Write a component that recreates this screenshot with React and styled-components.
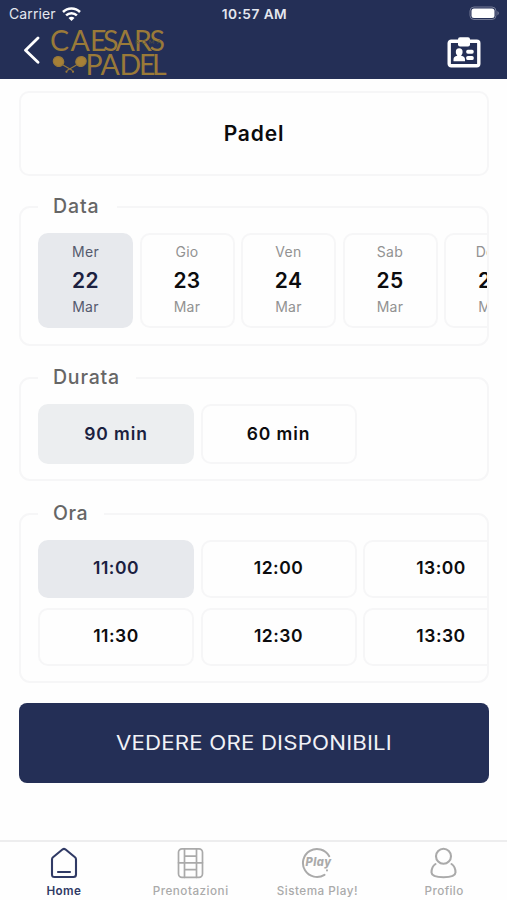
import React from 'react';
import styled, { createGlobalStyle } from 'styled-components';

const navy = '#242f56';
const line = '#f6f6f7';

const GlobalStyle = createGlobalStyle`
  * { box-sizing: border-box; }
  body { margin: 0; background: #fefefe; font-family: Inter, "Liberation Sans", sans-serif; }
  button { font-family: inherit; padding: 0; cursor: pointer; }
`;

const Screen = styled.div`
  width: 507px;
  height: 900px;
  display: flex;
  flex-direction: column;
  overflow: hidden;
  background: #fefefe;
`;

const Header = styled.header`
  height: 79px;
  flex: none;
  background: ${navy};
  color: #e4e7ef;
`;

const StatusBar = styled.div`
  height: 27px;
  display: grid;
  grid-template-columns: 1fr auto 1fr;
  align-items: center;
  padding: 1px 7px 0 9px;
  font-size: 14px;
  line-height: 26px;
`;

const Carrier = styled.div`
  display: flex;
  align-items: center;
  gap: 6px;
  letter-spacing: 0.1px;
`;

const Clock = styled.div`
  font-weight: 600;
  font-size: 13.7px;
  letter-spacing: 0.45px;
`;

const Battery = styled.svg`
  justify-self: end;
  margin-bottom: 2px;
`;

const NavBar = styled.div`
  height: 52px;
  display: flex;
  align-items: flex-start;
  padding: 0 26px 0 22px;
`;

const IconButton = styled.button`
  display: flex;
  border: 0;
  background: none;
  color: #fff;
  margin-top: ${p => p.$top}px;
`;

const Logo = styled.svg`
  margin-left: 8px;
  margin-right: auto;
  overflow: visible;
`;

const Content = styled.main`
  flex: 1;
  display: flex;
  flex-direction: column;
  padding: 12px 18px 0 19px;
`;

const TitleCard = styled.h1`
  margin: 0 0 30px;
  height: 85px;
  flex: none;
  display: flex;
  align-items: center;
  justify-content: center;
  border: 2px solid ${line};
  border-radius: 10px;
  color: #0b0b0d;
  font-size: 21px;
  font-weight: 600;
  letter-spacing: 0.85px;
  padding-bottom: 1px;
`;

const Group = styled.section`
  height: ${p => p.$height}px;
  flex: none;
  margin-bottom: ${p => p.$after}px;
  border: 2px solid ${line};
  border-radius: 11px;
  padding-left: 17px;
`;

const Legend = styled.h2`
  width: ${p => p.$width}px;
  height: 28px;
  margin: -15px 0 12px;
  padding-left: 15px;
  background: #fefefe;
  color: #666;
  font-size: 19.5px;
  line-height: 27px;
  font-weight: 500;
  letter-spacing: ${p => p.$spacing}px;
  white-space: nowrap;
`;

const Scroller = styled.div`
  display: grid;
  grid-template-columns: repeat(${p => p.$columns}, ${p => p.$size});
  grid-auto-rows: ${p => p.$row}px;
  column-gap: 6.5px;
  row-gap: ${p => p.$gap || 0}px;
  overflow: hidden;
`;

const Tile = styled.button`
  display: flex;
  flex-direction: column;
  align-items: center;
  justify-content: center;
  border: 2px solid ${p => (p.$selected ? p.$fill || '#e7e9ed' : line)};
  border-radius: 10px;
  background: ${p => (p.$selected ? p.$fill || '#e7e9ed' : '#fefefe')};
  color: ${p => (p.$selected ? '#1b2140' : '#0c0c0e')};
  font-size: 17.5px;
  font-weight: 600;
  letter-spacing: ${p => p.$spacing || 0}px;
  padding-bottom: ${p => p.$lift ?? 2}px;
`;

const DateLabel = styled.span`
  font-size: 14px;
  line-height: 20px;
  font-weight: 400;
  letter-spacing: 0.3px;
  color: ${p => (p.$selected ? '#555a6d' : '#929292')};
`;

const DateNumber = styled.span`
  font-size: 21px;
  line-height: 35px;
  padding-top: 1px;
  margin-bottom: -1px;
  font-weight: 600;
  letter-spacing: 0.3px;
`;

const Submit = styled.button`
  height: 80px;
  flex: none;
  border: 0;
  border-radius: 8px;
  background: ${navy};
  color: #f1f2f6;
  font-size: 19.5px;
  font-weight: 400;
  letter-spacing: 0.15px;
`;

const WideLabel = styled.span`
  display: inline-block;
  transform: scaleX(1.14);
`;

const TabBar = styled.nav`
  height: 60px;
  flex: none;
  display: grid;
  grid-template-columns: repeat(4, 1fr);
  border-top: 2px solid #ededee;
  background: #fefefe;
`;

const Tab = styled.button`
  display: flex;
  flex-direction: column;
  align-items: center;
  border: 0;
  background: none;
  padding: 5px 0 0 1px;
  color: ${p => (p.$active ? '#303a65' : '#aaa')};
  font-size: 11.7px;
  line-height: 16px;
  font-weight: ${p => (p.$active ? 600 : 500)};
  letter-spacing: ${p => p.$spacing}px;

  svg { margin-bottom: 4px; }
`;

const days = [['Mer', 22], ['Gio', 23], ['Ven', 24], ['Sab', 25], ['Dom', 26]];
const hours = ['11:00', '12:00', '13:00', '11:30', '12:30', '13:30'];

const outline = { fill: 'none', stroke: 'currentColor', strokeLinecap: 'round', strokeLinejoin: 'round' };

const WifiIcon = () => (
  <svg width="19" height="15" viewBox="0 0 19 15" fill="none" stroke="#fff" strokeWidth="2.5">
    <path d="M1 5C5.7.3 13.3.3 18 5" />
    <path d="M4.1 8.4C7.1 5.5 11.9 5.5 14.9 8.4" />
    <path d="M9.5 13.9 6.5 11C8.2 9.3 10.8 9.3 12.5 11Z" fill="#fff" stroke="none" />
  </svg>
);

const BrandLogo = () => (
  <Logo width="116" height="52" viewBox="0 0 116 52" fill="#9a7a39" fontFamily="Lato, sans-serif" fontWeight="400">
    <text x="0 20.5 40 53 65.5 84 99.5" y="24" fontSize="28.5">CAESARS</text>
    <text x="35.5 50.5 69.5 89 102" y="48" fontSize="28.5">PADEL</text>
    <text x="85" y="16.5" fontSize="6" textLength="26" fill="#59533f">ROMA</text>
    <g fill="#a68037" stroke="#97783a" strokeWidth="1.2">
      <ellipse cx="8.5" cy="34.5" rx="5.3" ry="4.8" transform="rotate(25 8.5 34.5)" />
      <ellipse cx="31" cy="34.5" rx="5.3" ry="4.8" transform="rotate(-25 31 34.5)" />
      <path d="M13 38 22.5 43.5M26.5 38 17 43.5" fill="none" />
      <circle cx="16.5" cy="44.7" r=".5" />
      <circle cx="23" cy="44.7" r=".5" />
    </g>
  </Logo>
);

const BadgeIcon = () => (
  <svg width="34" height="32" viewBox="0 0 34 32" fill="#fff">
    <rect x="2.2" y="4.2" width="29.6" height="24.6" rx="2" fill="none" stroke="#fff" strokeWidth="3.4" />
    <rect x="11" y=".3" width="12" height="9.2" rx="2" />
    <ellipse cx="12.2" cy="15" rx="3.4" ry="3.7" />
    <path d="M10.2 17h4v1.8c2.5.5 3.8 1.5 3.8 3.7v1.7H6.5v-1.7c0-2.2 1.3-3.2 3.7-3.7Z" />
    <rect x="19.2" y="12.7" width="7.5" height="4" rx="1.6" />
    <rect x="19.2" y="19" width="7.5" height="4" rx="1.6" />
  </svg>
);

const HomeIcon = () => (
  <svg width="28" height="32" viewBox="0 0 28 32" {...outline} strokeWidth="2.1">
    <path d="M12.7 2.3Q14 1.3 15.3 2.3L25 10.3Q26 11.1 26 12.4V27.5Q26 30 23.5 30H4.5Q2 30 2 27.5V12.4Q2 11.1 3 10.3Z" />
    <path d="M8 25h12" />
  </svg>
);

const CourtIcon = () => (
  <svg width="28" height="32" viewBox="0 0 28 32" {...outline} strokeWidth="1.7">
    <rect x="1.5" y="1.8" width="24" height="28.5" rx="3.5" />
    <path d="M7.5 1.8V30.3M19.5 1.8V30.3M1.5 15.8H25.5M7.5 9.2H19.5M7.5 22.7H19.5" />
  </svg>
);

const PlayIcon = () => (
  <svg width="32" height="32" viewBox="0 0 32 32" {...outline} strokeWidth="2">
    <path d="M28.2 9.2A14 14 0 1 0 23.5 27.8M26 23.3V23.4" />
    <text x="4.5" y="19" fill="currentColor" stroke="none" fontFamily="Inter, sans-serif" fontSize="12" fontWeight="800" fontStyle="italic" textLength="26" lengthAdjust="spacingAndGlyphs">Play</text>
  </svg>
);

const ProfileIcon = () => (
  <svg width="28" height="32" viewBox="0 0 28 32" {...outline} strokeWidth="2.1">
    <circle cx="13.5" cy="9.3" r="7.5" />
    <path d="M5.5 17Q1.5 19.7 1.5 25.5Q1.7 30.2 13.5 30.2Q25.3 30.2 25.5 25.5Q25.5 19.7 21.5 17" />
  </svg>
);

export default function App() {
  return (
    <Screen>
      <GlobalStyle />
      <Header>
        <StatusBar>
          <Carrier>Carrier <WifiIcon /></Carrier>
          <Clock>10:57 AM</Clock>
          <Battery width="31" height="15" viewBox="0 0 31 15">
            <rect x="1" y="1" width="26" height="12.5" rx="4" fill="none" stroke="#747b96" />
            <rect x="2.5" y="2.5" width="23" height="9.5" rx="2.5" fill="#fff" />
            <path d="M28.5 5Q31 7.2 28.5 9.5Z" fill="#858ba2" />
          </Battery>
        </StatusBar>
        <NavBar>
          <IconButton $top={9} aria-label="Indietro">
            <svg width="20" height="28" viewBox="0 0 20 28" {...outline} strokeWidth="2.8">
              <path d="M16 2 3.5 14.3 16 26.2" />
            </svg>
          </IconButton>
          <BrandLogo />
          <IconButton $top={10} aria-label="Tessera"><BadgeIcon /></IconButton>
        </NavBar>
      </Header>

      <Content>
        <TitleCard>Padel</TitleCard>

        <Group $height={140} $after={31}>
          <Legend $width={79} $spacing={0.9}>Data</Legend>
          <Scroller $columns={5} $size="95px" $row={95}>
            {days.map(([name, number], i) => (
              <Tile key={number} $selected={i === 0}>
                <DateLabel $selected={i === 0}>{name}</DateLabel>
                <DateNumber>{number}</DateNumber>
                <DateLabel $selected={i === 0}>Mar</DateLabel>
              </Tile>
            ))}
          </Scroller>
        </Group>

        <Group $height={104} $after={32}>
          <Legend $width={98} $spacing={0.8}>Durata</Legend>
          <Scroller $columns={2} $size="156px" $row={60}>
            <Tile $selected $fill="#eceef0" $spacing={0.9}>90 min</Tile>
            <Tile $spacing={0.9}>60 min</Tile>
          </Scroller>
        </Group>

        <Group $height={170} $after={20}>
          <Legend $width={66} $spacing={0.6}>Ora</Legend>
          <Scroller $columns={3} $size="156px" $row={58} $gap={10}>
            {hours.map((hour, i) => (
              <Tile key={hour} $selected={i === 0} $lift={4} $spacing={0.5}>{hour}</Tile>
            ))}
          </Scroller>
        </Group>

        <Submit><WideLabel>VEDERE ORE DISPONIBILI</WideLabel></Submit>
      </Content>

      <TabBar>
        <Tab $active $spacing={0.4}><HomeIcon />Home</Tab>
        <Tab $spacing={0.5}><CourtIcon />Prenotazioni</Tab>
        <Tab $spacing={0.5}><PlayIcon />Sistema Play!</Tab>
        <Tab $spacing={0.4}><ProfileIcon />Profilo</Tab>
      </TabBar>
    </Screen>
  );
}
